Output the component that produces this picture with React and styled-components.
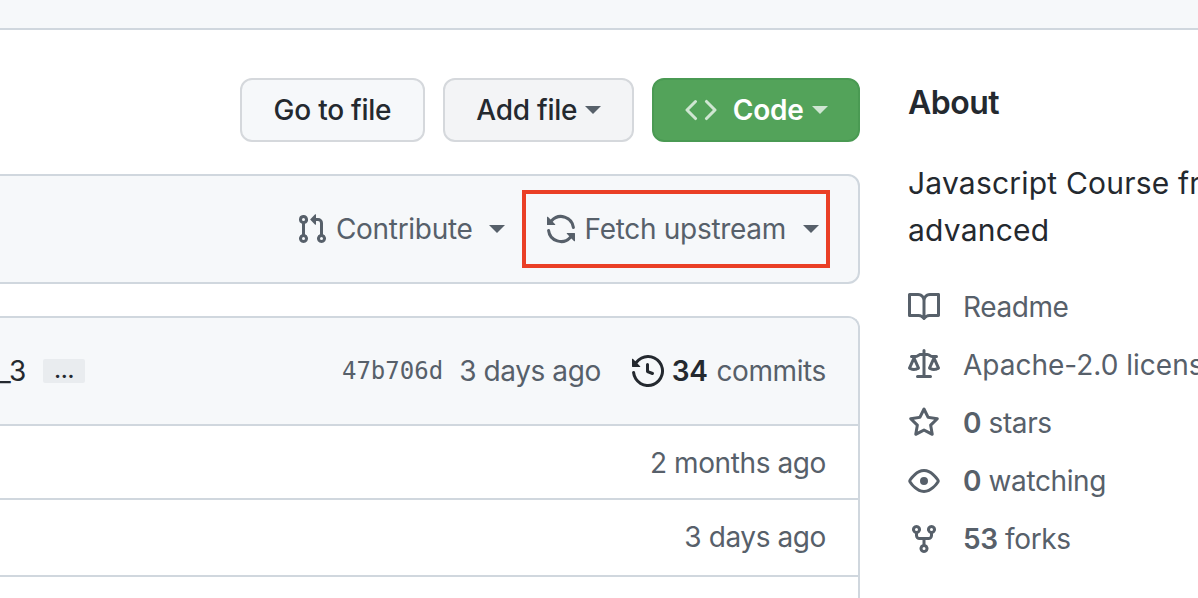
import React from 'react';
import styled, { createGlobalStyle } from 'styled-components';

// octicons, 16px versions (the heavier strokes match the screenshot)
const ICONS = {
  code: 'M4.72 3.22a.75.75 0 011.06 1.06L2.06 8l3.72 3.72a.75.75 0 11-1.06 1.06L.47 8.53a.75.75 0 010-1.06l4.25-4.25zm6.56 0a.75.75 0 10-1.06 1.06L13.94 8l-3.72 3.72a.75.75 0 101.06 1.06l4.25-4.25a.75.75 0 000-1.06l-4.25-4.25z',
  pull: 'M7.177 3.073L9.573.677A.25.25 0 0110 .854v4.792a.25.25 0 01-.427.177L7.177 3.427a.25.25 0 010-.354zM3.75 2.5a.75.75 0 100 1.5.75.75 0 000-1.5zm-2.25.75a2.25 2.25 0 113 2.122v5.256a2.251 2.251 0 11-1.5 0V5.372A2.25 2.25 0 011.5 3.25zM11 2.5h-1V4h1a1 1 0 011 1v5.628a2.251 2.251 0 101.5 0V5A2.5 2.5 0 0011 2.5zm1 10.25a.75.75 0 111.5 0 .75.75 0 01-1.5 0zM3.75 12a.75.75 0 100 1.5.75.75 0 000-1.5z',
  sync: 'M8 2.5a5.487 5.487 0 00-4.131 1.869l1.204 1.204A.25.25 0 014.896 6H1.25A.25.25 0 011 5.75V2.104a.25.25 0 01.427-.177l1.38 1.38A7.001 7.001 0 0114.95 7.16a.75.75 0 11-1.49.178A5.501 5.501 0 008 2.5zM1.705 8.005a.75.75 0 01.834.656 5.501 5.501 0 009.592 2.97l-1.204-1.204a.25.25 0 01.177-.427h3.646a.25.25 0 01.25.25v3.646a.25.25 0 01-.427.177l-1.38-1.38A7.001 7.001 0 011.05 8.84a.75.75 0 01.656-.834z',
  history: 'M1.643 3.143L.427 1.927A.25.25 0 000 2.104V5.75c0 .138.112.25.25.25h3.646a.25.25 0 00.177-.427L2.715 4.215a6.5 6.5 0 11-1.18 4.458.75.75 0 10-1.493.154 8.001 8.001 0 101.6-5.684zM7.75 4a.75.75 0 01.75.75v2.992l2.028.812a.75.75 0 01-.557 1.392l-2.5-1A.75.75 0 017 8.25v-3.5A.75.75 0 017.75 4z',
  book: 'M0 1.75A.75.75 0 01.75 1h4.253c1.227 0 2.317.59 3 1.501A3.744 3.744 0 0111.006 1h4.245a.75.75 0 01.75.75v10.5a.75.75 0 01-.75.75h-4.507a2.25 2.25 0 00-1.591.659l-.622.621a.75.75 0 01-1.06 0l-.622-.621A2.25 2.25 0 005.258 13H.75a.75.75 0 01-.75-.75V1.75zm8.755 3a2.25 2.25 0 012.25-2.25H14.5v9h-3.757c-.71 0-1.4.201-1.992.572l.004-7.322zm-1.504 7.324l.004-5.073-.002-2.253A2.25 2.25 0 005.003 2.5H1.5v9h3.757a3.75 3.75 0 011.994.574z',
  law: 'M8.75.75a.75.75 0 00-1.5 0V2h-.984c-.305 0-.604.08-.869.23l-1.288.737A.25.25 0 013.984 3H1.75a.75.75 0 000 1.5h.428L.066 9.192a.75.75 0 00.154.838l.53-.53-.53.53v.001l.002.002.002.002.006.006.016.015.045.04a3.514 3.514 0 00.686.45A4.492 4.492 0 003 11c.88 0 1.556-.22 2.023-.454a3.515 3.515 0 00.686-.45l.045-.04.016-.015.006-.006.002-.002.001-.002L5.25 9.5l.53.53a.75.75 0 00.154-.838L3.822 4.5h.162c.305 0 .604-.08.869-.23l1.289-.737a.25.25 0 01.124-.033h.984V13h-2.5a.75.75 0 000 1.5h6.5a.75.75 0 000-1.5h-2.5V3.5h.984a.25.25 0 01.124.033l1.29.736c.264.152.563.231.868.231h.162l-2.112 4.692a.75.75 0 00.154.838l.53-.53-.53.53v.001l.002.002.002.002.006.006.016.015.045.04a3.517 3.517 0 00.686.45A4.492 4.492 0 0013 11c.88 0 1.556-.22 2.023-.454a3.512 3.512 0 00.686-.45l.045-.04.01-.01.006-.005.006-.006.002-.002.001-.002-.529-.531.53.53a.75.75 0 00.154-.838L13.823 4.5h.427a.75.75 0 000-1.5h-2.234a.25.25 0 01-.124-.033l-1.29-.736A1.75 1.75 0 009.735 2H8.75V.75zM1.695 9.227c.285.135.718.273 1.305.273s1.02-.138 1.305-.273L3 6.327l-1.305 2.9zm10 0c.285.135.718.273 1.305.273s1.02-.138 1.305-.273L13 6.327l-1.305 2.9z',
  star: 'M8 .25a.75.75 0 01.673.418l1.882 3.815 4.21.612a.75.75 0 01.416 1.279l-3.046 2.97.719 4.192a.75.75 0 01-1.088.791L8 12.347l-3.766 1.98a.75.75 0 01-1.088-.79l.72-4.194L.818 6.374a.75.75 0 01.416-1.28l4.21-.611L7.327.668A.75.75 0 018 .25zm0 2.445L6.615 5.5a.75.75 0 01-.564.41l-3.097.45 2.24 2.184a.75.75 0 01.216.664l-.528 3.084 2.769-1.456a.75.75 0 01.698 0l2.77 1.456-.53-3.084a.75.75 0 01.216-.664l2.24-2.183-3.096-.45a.75.75 0 01-.564-.41L8 2.694v.001z',
  eye: 'M1.679 7.932c.412-.621 1.242-1.75 2.366-2.717C5.175 4.242 6.527 3.5 8 3.5c1.473 0 2.824.742 3.955 1.715 1.124.967 1.954 2.096 2.366 2.717a.119.119 0 010 .136c-.412.621-1.242 1.75-2.366 2.717C10.825 11.758 9.473 12.5 8 12.5c-1.473 0-2.824-.742-3.955-1.715C2.92 9.818 2.09 8.69 1.679 8.068a.119.119 0 010-.136zM8 2c-1.981 0-3.67.992-4.933 2.078C1.797 5.169.88 6.423.43 7.1a1.619 1.619 0 000 1.798c.45.678 1.367 1.932 2.637 3.024C4.329 13.008 6.019 14 8 14c1.981 0 3.67-.992 4.933-2.078 1.27-1.091 2.187-2.345 2.637-3.023a1.619 1.619 0 000-1.798c-.45-.678-1.367-1.932-2.637-3.023C11.671 2.992 9.981 2 8 2zm0 8a2 2 0 100-4 2 2 0 000 4z',
  fork: 'M5 3.25a.75.75 0 11-1.5 0 .75.75 0 011.5 0zm0 2.122a2.25 2.25 0 10-1.5 0v.878A2.25 2.25 0 005.75 8.5h1.5v2.128a2.251 2.251 0 101.5 0V8.5h1.5a2.25 2.25 0 002.25-2.25v-.878a2.25 2.25 0 10-1.5 0v.878a.75.75 0 01-.75.75h-4.5A.75.75 0 015 6.25v-.878zm3.75 7.378a.75.75 0 11-1.5 0 .75.75 0 011.5 0zm3-8.75a.75.75 0 100-1.5.75.75 0 000 1.5z',
};

const Octicon = ({ name, className }) => (
  <svg className={className} viewBox="0 0 16 16" fill="currentColor" fillRule="evenodd">
    <path d={ICONS[name]} />
  </svg>
);

const GlobalStyle = createGlobalStyle`
  html, body {
    margin: 0;
    background: #fff;
    overflow: hidden;
  }
  body {
    font-family: Inter, "Liberation Sans", sans-serif;
    color: #24292f;
  }
`;

const Page = styled.div`
  width: 1198px;
  height: 598px;
  overflow: hidden;
`;

const TopBar = styled.div`
  height: 28px;
  background: #f6f8fa;
  border-bottom: 2px solid #d0d7de;
`;

const Layout = styled.div`
  display: flex;
  gap: 48px;
  margin-left: -40px;
  padding-top: 48px;
`;

const Main = styled.div`
  flex: 0 0 900px;
  display: flex;
  flex-direction: column;
`;

const Actions = styled.div`
  display: flex;
  justify-content: flex-end;
  gap: 18px;
  height: 64px;
`;

const Button = styled.div`
  display: flex;
  align-items: center;
  gap: 8px;
  box-sizing: border-box;
  height: 64px;
  padding: 0 ${(p) => p.$pad || 32}px;
  border: 2px solid ${(p) => (p.$primary ? '#4a9a53' : '#d5d8dc')};
  border-radius: 12px;
  background: ${(p) => (p.$primary ? '#53a35a' : p.$tint || '#f6f8fa')};
  color: ${(p) => (p.$primary ? '#fff' : '#24292f')};
  font-size: 28px;
  font-weight: ${(p) => (p.$primary ? 600 : 500)};
  letter-spacing: -0.25px;
  white-space: nowrap;
`;

const Caret = styled.span`
  display: inline-block;
  width: 0;
  height: 0;
  margin-left: ${(p) => p.$gap || 0}px;
  border-style: solid;
  border-width: 8px 8px 0;
  border-color: ${(p) => p.$color || '#57606a'} transparent transparent;
`;

const CodeIcon = styled(Octicon)`
  width: 32px;
  height: 32px;
  margin-right: 8px;
  color: #cfe6d2;
`;

const ForkBar = styled.div`
  box-sizing: border-box;
  height: 110px;
  margin-top: 32px;
  padding-right: 28px;
  display: flex;
  justify-content: flex-end;
  align-items: center;
  gap: 17px;
  background: #f6f8fa;
  border: 2px solid #d0d7de;
  border-radius: 12px;
  color: #57606a;
  font-size: 28px;
`;

const ForkAction = styled.div`
  display: flex;
  align-items: center;
  color: #57606a;
  letter-spacing: -0.3px;
  white-space: nowrap;
  svg {
    width: 32px;
    height: 32px;
    margin-right: 8px;
  }
`;

const Highlight = styled.div`
  box-sizing: border-box;
  height: 78px;
  padding: 0 7px 0 19px;
  display: flex;
  align-items: center;
  border: 4px solid #ea3f26;
`;

const FileBox = styled.div`
  margin-top: 32px;
  border: 2px solid #d0d7de;
  border-bottom: 0;
  border-radius: 12px 12px 0 0;
  font-size: 28px;
  letter-spacing: -0.4px;
  color: #57606a;
`;

const CommitHeader = styled.div`
  box-sizing: border-box;
  height: 106px;
  padding: 0 32px 0 36px;
  display: flex;
  align-items: center;
  background: #f6f8fa;
  border-radius: 10px 10px 0 0;
`;

const CommitMessage = styled.div`
  display: flex;
  align-items: center;
  gap: 17px;
  margin-right: auto;
  color: #24292f;
`;

const MoreBadge = styled.span`
  width: 42px;
  height: 24px;
  display: flex;
  justify-content: center;
  align-items: center;
  background: #e9ecef;
  border-radius: 2px;
  font-size: 20px;
  font-weight: 700;
  line-height: 24px;
`;

const Sha = styled.span`
  font-family: "DejaVu Sans Mono", "Liberation Mono", monospace;
  font-size: 24px;
  letter-spacing: 0;
  margin-right: 16px;
`;

const Commits = styled.div`
  display: flex;
  align-items: center;
  margin-left: 31px;
  white-space: nowrap;
  svg {
    width: 32px;
    height: 32px;
    margin-right: 8px;
    color: #24292f;
  }
  strong {
    color: #24292f;
    font-weight: 600;
    margin-right: 9px;
  }
`;

const FileRow = styled.div`
  box-sizing: border-box;
  height: ${(p) => p.$height}px;
  padding: ${(p) => p.$top || 0}px 32px ${(p) => p.$bottom || 0}px 0;
  display: flex;
  justify-content: flex-end;
  align-items: center;
  border-top: 2px solid #d0d7de;
  white-space: nowrap;
`;

const Sidebar = styled.aside`
  flex: 0 0 590px;
  padding-top: 1px;
`;

const Title = styled.h2`
  margin: 0;
  font-size: 32px;
  font-weight: 600;
  letter-spacing: -0.5px;
  line-height: 48px;
`;

const Description = styled.p`
  margin: 33px 0 0;
  font-size: 30px;
  letter-spacing: 0.2px;
  line-height: 47px;
`;

const Meta = styled.div`
  margin-top: 24px;
  display: flex;
  flex-direction: column;
`;

const MetaRow = styled.div`
  height: 58px;
  display: flex;
  align-items: center;
  gap: 23px;
  color: #57606a;
  font-size: 28px;
  letter-spacing: ${(p) => p.$spacing ?? -0.4}px;
  white-space: nowrap;
  svg {
    flex: none;
    width: 32px;
    height: 32px;
  }
  strong {
    font-weight: 600;
  }
`;

const App = () => {
  return (
    <Page>
      <GlobalStyle />
      <TopBar />
      <Layout>
        <Main>
          <Actions>
            <Button $pad={32}>Go to file</Button>
            <Button $pad={31} $tint="#f3f4f6">
              Add file
              <Caret $color="#57606a" />
            </Button>
            <Button $primary $pad={30.5}>
              <CodeIcon name="code" />
              Code
              <Caret $color="#cfe6d2" />
            </Button>
          </Actions>
          <ForkBar>
            <ForkAction>
              <Octicon name="pull" />
              Contribute
              <Caret $gap={16} />
            </ForkAction>
            <Highlight>
              <ForkAction>
                <Octicon name="sync" />
                Fetch upstream
                <Caret $gap={17} />
              </ForkAction>
            </Highlight>
          </ForkBar>
          <FileBox>
            <CommitHeader>
              <CommitMessage>
                _3
                <MoreBadge>…</MoreBadge>
              </CommitMessage>
              <Sha>47b706d</Sha>
              3 days ago
              <Commits>
                <Octicon name="history" />
                <strong>34</strong>
                commits
              </Commits>
            </CommitHeader>
            <FileRow $height={74} $top={2}>2 months ago</FileRow>
            <FileRow $height={77} $bottom={2}>3 days ago</FileRow>
            <FileRow $height={40} />
          </FileBox>
        </Main>
        <Sidebar>
          <Title>About</Title>
          <Description>Javascript Course from beginner to advanced</Description>
          <Meta>
            <MetaRow>
              <Octicon name="book" />
              Readme
            </MetaRow>
            <MetaRow $spacing={0}>
              <Octicon name="law" />
              Apache-2.0 license
            </MetaRow>
            <MetaRow>
              <Octicon name="star" />
              <span>
                <strong>0</strong> stars
              </span>
            </MetaRow>
            <MetaRow>
              <Octicon name="eye" />
              <span>
                <strong>0</strong> watching
              </span>
            </MetaRow>
            <MetaRow>
              <Octicon name="fork" />
              <span>
                <strong>53</strong> forks
              </span>
            </MetaRow>
          </Meta>
        </Sidebar>
      </Layout>
    </Page>
  );
};

export default App;
